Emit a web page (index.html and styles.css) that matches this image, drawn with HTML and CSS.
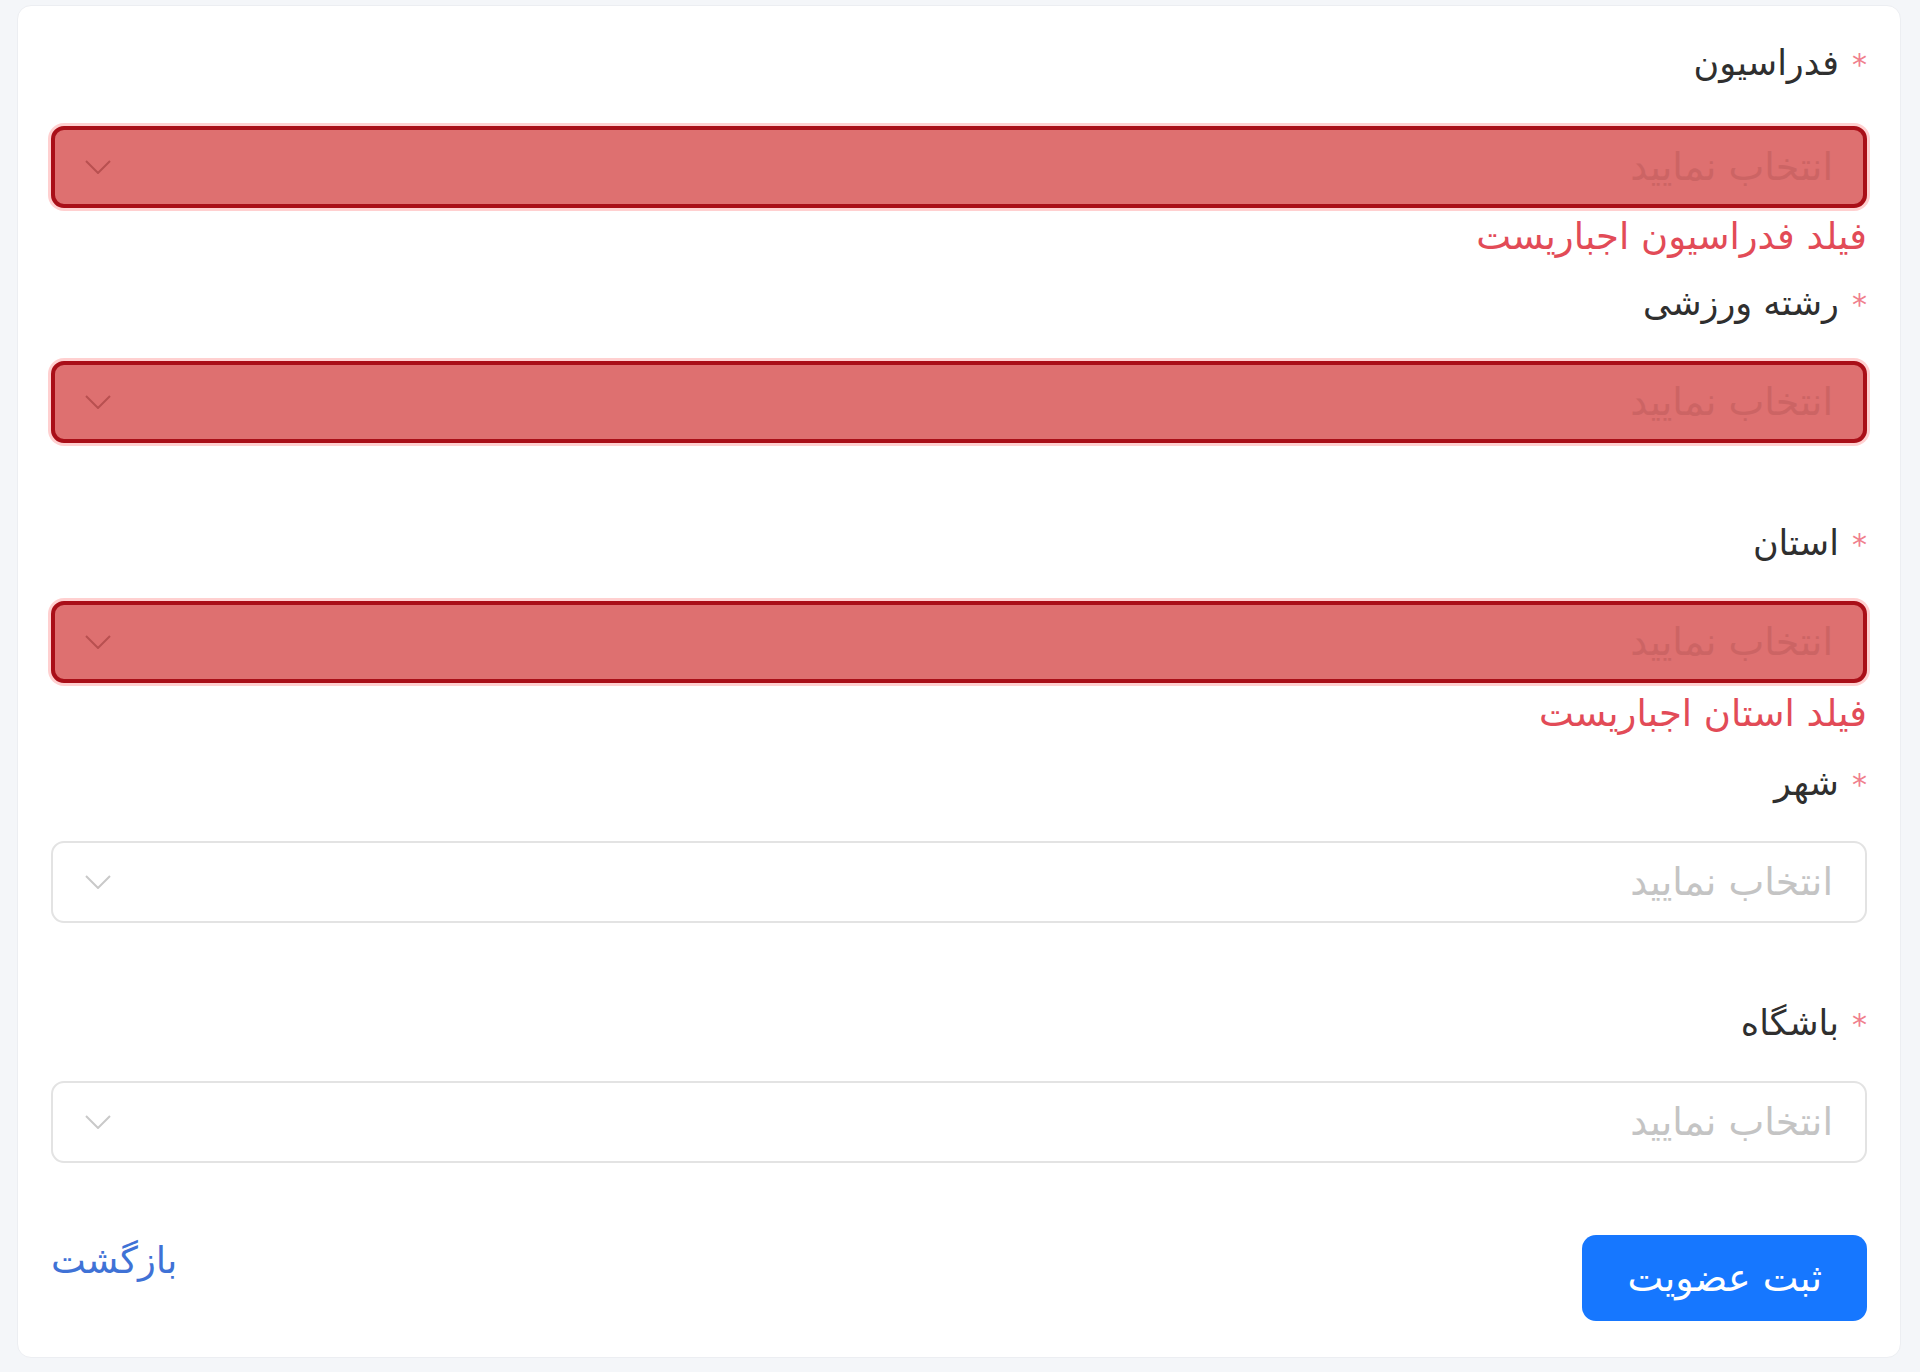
FILE: index.html
```html
<!DOCTYPE html>
<html lang="fa" dir="rtl">
<head>
    <meta charset="utf-8">
    <title>ثبت عضویت</title>
    <link rel="stylesheet" href="styles.css">
</head>
<body>
    <div class="form-card">
        <form id="memberForm" class="member-form">
            <div class="form-item">
                <label class="form-label"><span class="required">*</span> فدراسیون</label>
                <div class="select-box has-error">
                    <span class="placeholder">انتخاب نمایید</span>
                    <svg class="chevron" viewBox="0 0 26 14"><polyline points="1,1 13,13 25,1"/></svg>
                </div>
                <div class="form-explain">فیلد فدراسیون اجباریست</div>
            </div>
            <div class="form-item">
                <label class="form-label"><span class="required">*</span> رشته ورزشی</label>
                <div class="select-box has-error">
                    <span class="placeholder">انتخاب نمایید</span>
                    <svg class="chevron" viewBox="0 0 26 14"><polyline points="1,1 13,13 25,1"/></svg>
                </div>
                <div class="form-explain"></div>
            </div>
            <div class="form-item">
                <label class="form-label"><span class="required">*</span> استان</label>
                <div class="select-box has-error">
                    <span class="placeholder">انتخاب نمایید</span>
                    <svg class="chevron" viewBox="0 0 26 14"><polyline points="1,1 13,13 25,1"/></svg>
                </div>
                <div class="form-explain">فیلد استان اجباریست</div>
            </div>
            <div class="form-item">
                <label class="form-label"><span class="required">*</span> شهر</label>
                <div class="select-box">
                    <span class="placeholder">انتخاب نمایید</span>
                    <svg class="chevron" viewBox="0 0 26 14"><polyline points="1,1 13,13 25,1"/></svg>
                </div>
                <div class="form-explain"></div>
            </div>
            <div class="form-item">
                <label class="form-label"><span class="required">*</span> باشگاه</label>
                <div class="select-box">
                    <span class="placeholder">انتخاب نمایید</span>
                    <svg class="chevron" viewBox="0 0 26 14"><polyline points="1,1 13,13 25,1"/></svg>
                </div>
                <div class="form-explain"></div>
            </div>
            <div class="form-actions">
                <button type="submit" class="submit-button">ثبت عضویت</button>
                <a href="#" class="back-link">بازگشت</a>
            </div>
        </form>
    </div>
</body>
</html>
```
FILE: styles.css
```css
body {
    font-family: "DejaVu Sans", "Noto Sans", sans-serif;
    background-color: #f4f6f9;
    margin: 0;
    padding: 5px 19px 20px 17px;
}
.form-card {
    background-color: white;
    border: 1px solid #eceef2;
    border-radius: 14px;
    padding: 29px 33px 36px 33px;
}
.form-item {
    display: flex;
    flex-direction: column;
}
.form-label {
    display: block;
    height: 56px;
    font-size: 35px;
    line-height: 56px;
    color: #2f2f2f;
    margin-bottom: 30px;
}
.form-item:first-child .form-label {
    margin-bottom: 35px;
}
.required {
    color: #f07f8d;
    font-size: 30px;
    margin-left: 2px;
    vertical-align: middle;
}
.select-box {
    height: 82px;
    box-sizing: border-box;
    border: 2px solid #e3e3e3;
    border-radius: 13px;
    display: flex;
    align-items: center;
    justify-content: space-between;
    padding: 0 32px 0 32px;
    background-color: white;
}
.select-box .placeholder {
    font-size: 38px;
    line-height: 50px;
    color: #c4c4c4;
}
.select-box .chevron {
    width: 26px;
    height: 14px;
    fill: none;
    stroke: #c9c9c9;
    stroke-width: 2;
}
.select-box.has-error {
    background-color: #de7070;
    border: 4px solid #a90f18;
    box-shadow: 0 0 0 3px rgba(255, 120, 120, 0.35);
    padding: 0 30px 0 30px;
}
.select-box.has-error .placeholder {
    color: #cc6464;
}
.select-box.has-error .chevron {
    stroke: #b85050;
}
.form-explain {
    height: 72px;
    box-sizing: border-box;
    padding-top: 11px;
    font-size: 37px;
    line-height: 40px;
    color: #e24b57;
}
.form-item:first-child .form-explain {
    height: 67px;
    padding-top: 9px;
}
.form-actions {
    display: flex;
    justify-content: space-between;
    align-items: flex-start;
}
.submit-button {
    height: 86px;
    padding: 0 45px;
    background-color: #1677ff;
    border: none;
    border-radius: 14px;
    color: white;
    font-family: inherit;
    font-size: 38px;
    cursor: pointer;
}
.back-link {
    font-size: 37px;
    line-height: 52px;
    color: #3f72d6;
    text-decoration: none;
}
```
